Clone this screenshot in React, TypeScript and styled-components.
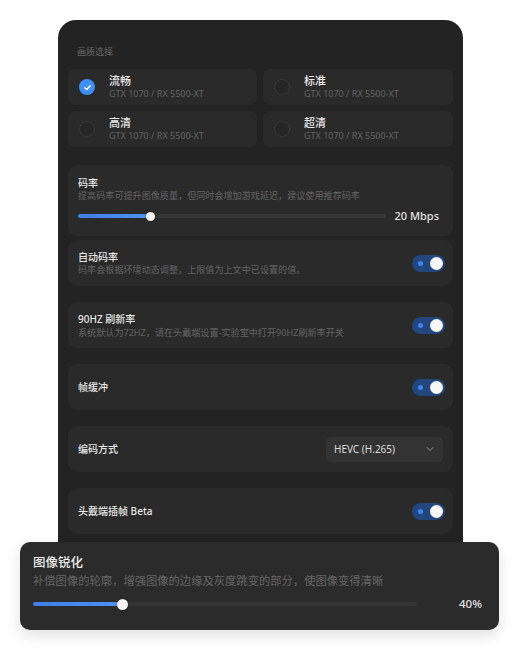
import React from "react";
import styled, { createGlobalStyle } from "styled-components";

const Global = createGlobalStyle`
  html, body { margin: 0; padding: 0; background: #ffffff; }
  body { font-family: "Noto Sans", "Noto Sans CJK SC", sans-serif; }
  * { box-sizing: border-box; }
`;

const Stage = styled.div`
  position: relative;
  width: 521px;
  height: 650px;
  padding-top: 20px;
`;

const Panel = styled.div`
  margin-left: 58px;
  width: 405px;
  height: 580px;
  background: #232323;
  border-radius: 18px;
  padding: 26px 10px 0 10px;
  display: flex;
  flex-direction: column;
`;

const SectionLabel = styled.div`
  margin-left: 9px;
  font-size: 9px;
  line-height: 12px;
  color: #6a6a6a;
`;

const OptionGrid = styled.div`
  margin-top: 11px;
  display: grid;
  grid-template-columns: 189px 190px;
  grid-auto-rows: 36px;
  column-gap: 6px;
  row-gap: 6px;
`;

const Option = styled.div`
  background: #2a2a2a;
  border-radius: 7px;
  display: flex;
  align-items: center;
  padding-left: 11px;
  gap: 14px;
`;

const Radio = styled.div<{ $on?: boolean }>`
  width: 16px;
  height: 16px;
  border-radius: 50%;
  flex: none;
  display: flex;
  align-items: center;
  justify-content: center;
  background: ${(p) => (p.$on ? "#3f8ef2" : "#262626")};
  border: ${(p) => (p.$on ? "none" : "1.5px solid #383838")};
`;

const OptionText = styled.div`
  display: flex;
  flex-direction: column;
`;

const OptionTitle = styled.div`
  font-size: 11px;
  line-height: 14px;
  font-weight: 500;
  color: #e8e8e8;
`;

const OptionSub = styled.div`
  font-size: 9px;
  line-height: 12px;
  color: #636363;
`;

const Card = styled.div<{ $gap: number }>`
  margin-top: ${(p) => p.$gap}px;
  background: #2a2a2a;
  border-radius: 9px;
`;

const SliderCard = styled(Card)`
  padding: 11px 14px 13px 10px;
`;

const RowCard = styled(Card)`
  height: 46px;
  padding: 0 8px 0 10px;
  display: flex;
  align-items: center;
  justify-content: space-between;
`;

const TextBlock = styled.div<{ $spread?: number }>`
  display: flex;
  flex-direction: column;
  gap: ${(p) => p.$spread ?? 0}px;
`;

const Title = styled.div`
  font-size: 10px;
  line-height: 14px;
  font-weight: 500;
  color: #e8e8e8;
`;

const Sub = styled.div`
  font-size: 9.1px;
  line-height: 12px;
  color: #646464;
`;

const SliderRow = styled.div<{ $top: number }>`
  margin-top: ${(p) => p.$top}px;
  height: 14px;
  display: flex;
  align-items: center;
  justify-content: space-between;
`;

const Track = styled.div<{ $w: number }>`
  position: relative;
  width: ${(p) => p.$w}px;
  height: 4px;
  border-radius: 2px;
  background: #353535;
`;

const Fill = styled.div`
  position: absolute;
  left: 0;
  top: 0;
  bottom: 0;
  border-radius: 2px;
  background: linear-gradient(90deg, #3f7fe6, #4d92f5);
`;

const Thumb = styled.div<{ $size: number }>`
  position: absolute;
  top: 50%;
  width: ${(p) => p.$size}px;
  height: ${(p) => p.$size}px;
  margin-left: ${(p) => -p.$size / 2}px;
  margin-top: ${(p) => -p.$size / 2}px;
  border-radius: 50%;
  background: #f4f4f4;
  box-shadow: 0 0 2px rgba(0, 0, 0, 0.4);
`;

const Value = styled.div<{ $size: number }>`
  font-size: ${(p) => p.$size}px;
  font-weight: 500;
  color: #e2e2e2;
  line-height: 14px;
`;

const ToggleBody = styled.div`
  position: relative;
  width: 33px;
  height: 17px;
  border-radius: 9px;
  background: #23467e;
  flex: none;
`;

const ToggleDot = styled.div`
  position: absolute;
  left: 6px;
  top: 6px;
  width: 5px;
  height: 5px;
  border-radius: 50%;
  background: #3d86f0;
`;

const ToggleKnob = styled.div`
  position: absolute;
  right: 2px;
  top: 2px;
  width: 13px;
  height: 13px;
  border-radius: 50%;
  background: #f7f7f7;
`;

const Select = styled.div`
  width: 117px;
  height: 25px;
  margin-right: 2px;
  border-radius: 5px;
  background: #333333;
  display: flex;
  align-items: center;
  justify-content: space-between;
  padding: 0 9px 0 8px;
  font-size: 10px;
  color: #dddddd;
`;

const Overlay = styled.div`
  position: absolute;
  left: 20px;
  top: 542px;
  width: 479px;
  height: 88px;
  border-radius: 10px;
  background: #2b2b2b;
  padding: 13px 17px 0 13px;
  box-shadow: 0 6px 14px rgba(0, 0, 0, 0.12);
`;

const BigTitle = styled.div`
  font-size: 12.5px;
  line-height: 16px;
  font-weight: 500;
  color: #ececec;
`;

const BigSub = styled.div`
  margin-top: 2px;
  font-size: 11.3px;
  line-height: 15px;
  color: #666666;
`;

const Check = () => (
  <svg width="9" height="9" viewBox="0 0 10 10">
    <path d="M2 5.2 L4.2 7.2 L8 3" fill="none" stroke="#fff" strokeWidth="1.6" strokeLinecap="round" strokeLinejoin="round" />
  </svg>
);

const Chevron = () => (
  <svg width="8" height="6" viewBox="0 0 8 6">
    <path d="M1 1.5 L4 4.5 L7 1.5" fill="none" stroke="#6a6a6a" strokeWidth="1.1" strokeLinecap="round" strokeLinejoin="round" />
  </svg>
);

const Toggle = () => (
  <ToggleBody>
    <ToggleDot />
    <ToggleKnob />
  </ToggleBody>
);

const Slider = ({ width, pct, thumb }: { width: number; pct: number; thumb: number }) => (
  <Track $w={width}>
    <Fill style={{ width: `${pct}%` }} />
    <Thumb $size={thumb} style={{ left: `${pct}%` }} />
  </Track>
);

const options = [
  { name: "流畅", on: true },
  { name: "标准" },
  { name: "高清" },
  { name: "超清" },
];

export default function App() {
  return (
    <>
      <Global />
      <Stage>
        <Panel>
          <SectionLabel>画质选择</SectionLabel>
          <OptionGrid>
            {options.map((o) => (
              <Option key={o.name}>
                <Radio $on={o.on}>{o.on && <Check />}</Radio>
                <OptionText>
                  <OptionTitle>{o.name}</OptionTitle>
                  <OptionSub>GTX 1070 / RX 5500-XT</OptionSub>
                </OptionText>
              </Option>
            ))}
          </OptionGrid>

          <SliderCard $gap={18}>
            <Title>码率</Title>
            <Sub>提高码率可提升图像质量，但同时会增加游戏延迟，建议使用推荐码率</Sub>
            <SliderRow $top={7}>
              <Slider width={308} pct={23.4} thumb={9} />
              <Value $size={11}>20 Mbps</Value>
            </SliderRow>
          </SliderCard>

          <RowCard $gap={4}>
            <TextBlock>
              <Title>自动码率</Title>
              <Sub>码率会根据环境动态调整，上限值为上文中已设置的值。</Sub>
            </TextBlock>
            <Toggle />
          </RowCard>

          <RowCard $gap={16}>
            <TextBlock $spread={1}>
              <Title>90HZ 刷新率</Title>
              <Sub>系统默认为72HZ，请在头戴端设置-实验室中打开90HZ刷新率开关</Sub>
            </TextBlock>
            <Toggle />
          </RowCard>

          <RowCard $gap={16}>
            <Title>帧缓冲</Title>
            <Toggle />
          </RowCard>

          <RowCard $gap={16}>
            <Title>编码方式</Title>
            <Select>
              <span>HEVC (H.265)</span>
              <Chevron />
            </Select>
          </RowCard>

          <RowCard $gap={16}>
            <Title>头戴端插帧 Beta</Title>
            <Toggle />
          </RowCard>
        </Panel>

        <Overlay>
          <BigTitle>图像锐化</BigTitle>
          <BigSub>补偿图像的轮廓，增强图像的边缘及灰度跳变的部分，使图像变得清晰</BigSub>
          <SliderRow $top={9}>
            <Slider width={384} pct={23.4} thumb={11} />
            <Value $size={11.5}>40%</Value>
          </SliderRow>
        </Overlay>
      </Stage>
    </>
  );
}
